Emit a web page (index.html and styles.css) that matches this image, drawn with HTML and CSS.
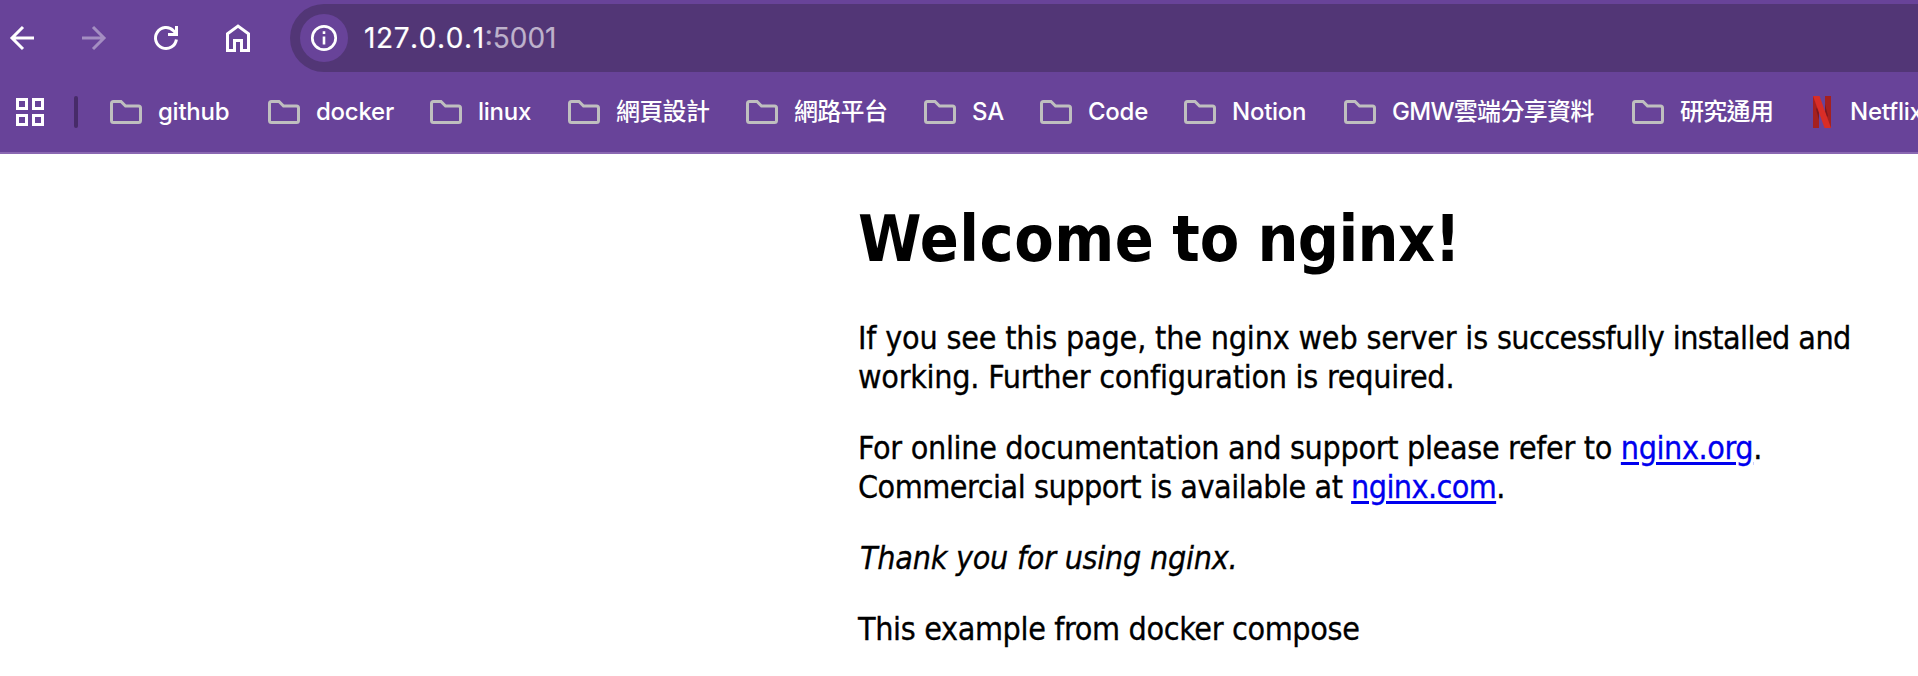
FILE: index.html
```
<!DOCTYPE html>
<html lang="zh-Hant">
<head>
<meta charset="utf-8">
<title>Welcome to nginx!</title>
<link rel="stylesheet" href="styles.css">
</head>
<body>
<svg class="defs" width="0" height="0" aria-hidden="true">
  <symbol id="folder" viewBox="0 0 32 24"><path d="M3.5 1.5H11L15.5 6H28.5Q30.500 6 30.500 8V20.500Q30.500 22.500 28.500 22.500H3.500Q1.500 22.500 1.500 20.500V3.500Q1.500 1.500 3.500 1.500Z" fill="none" stroke="#bfbfbf" stroke-width="3"/></symbol>
</svg>
<header class="chrome">
  <nav class="toolbar">
    <svg class="tool" viewBox="0 0 28 32"><path d="M26 16H4M15 5L4 16L15 27" fill="none" stroke="#fff" stroke-width="3"/></svg>
    <svg class="tool dim" viewBox="0 0 28 32"><path d="M2 16H24M13 5L24 16L13 27" fill="none" stroke="#fff" stroke-width="3"/></svg>
    <svg class="tool" viewBox="0 0 28 32"><path d="M24.400 17.500A10.500 10.500 0 1 1 21.500 8.700L24 11.200" fill="none" stroke="#fff" stroke-width="3"/><path d="M24.500 4V12.500H16" fill="none" stroke="#fff" stroke-width="3"/></svg>
    <svg class="tool" viewBox="0 0 28 32"><path d="M3.500 28.500V11.700L14 4L24.500 11.700V28.500H17.500V18.500H10.500V28.500Z" fill="none" stroke="#fff" stroke-width="3"/></svg>
    <div class="omnibox">
      <span class="info"><svg viewBox="0 0 48 48"><circle cx="24" cy="24" r="11.700" fill="none" stroke="#fff" stroke-width="2.700"/><path d="M24 22.500V30.500M24 17.300V20" stroke="#fff" stroke-width="2.600"/></svg></span>
      <div class="url"><span class="host">127.0.0.1</span><span class="port">:5001</span></div>
    </div>
  </nav>
  <div class="bookmarks">
    <svg class="apps" viewBox="0 0 28 28"><path d="M1.500 1.500h9v9h-9zM17.500 1.500h9v9h-9zM1.500 17.500h9v9h-9zM17.500 17.500h9v9h-9z" fill="none" stroke="#fff" stroke-width="3"/></svg>
    <span class="divider"></span>
    <div class="marks">
      <a class="mark"><svg><use href="#folder"/></svg>github</a>
      <a class="mark"><svg><use href="#folder"/></svg>docker</a>
      <a class="mark"><svg><use href="#folder"/></svg>linux</a>
      <a class="mark cjk"><svg><use href="#folder"/></svg>網頁設計</a>
      <a class="mark cjk"><svg><use href="#folder"/></svg>網路平台</a>
      <a class="mark"><svg><use href="#folder"/></svg>SA</a>
      <a class="mark"><svg><use href="#folder"/></svg>Code</a>
      <a class="mark"><svg><use href="#folder"/></svg>Notion</a>
      <a class="mark cjk"><svg><use href="#folder"/></svg>GMW雲端分享資料</a>
      <a class="mark cjk"><svg><use href="#folder"/></svg>研究通用</a>
      <a class="mark netflix"><svg viewBox="0 0 18 32"><path d="M0 0H6V32H0ZM12 0H18V32H12Z" fill="#a5201f"/><path d="M6 9V24L3 13ZM12 8V22L15 20Z" fill="#7d1720"/><path d="M0 0H6.500L18 32H11.500Z" fill="#d92d27"/></svg>Netflix</a>
    </div>
  </div>
</header>
<main class="page">
  <h1><span class="w1">Welcome</span> to <span class="w3">nginx!</span></h1>
  <p><span class="l1">If you see this page, the nginx web server is </span><span class="l1b">successfully installed and</span><br><span class="l2">working. Further configuration is required.</span></p>
  <p><span class="l3">For online documentation and support please refer to </span><a class="org" href="#">nginx.org</a>.<br><span class="l4">Commercial support is available at </span><a class="com" href="#">nginx.com</a>.</p>
  <p class="thanks"><em>Thank you for using nginx.</em></p>
  <p class="example">This example from docker compose</p>
</main>
</body>
</html>
```
FILE: styles.css
```
* { box-sizing: border-box; }
html, body { height: 100%; }
body {
  margin: 0;
  overflow: hidden;
  background: #fff;
  color: #000;
}
.defs { display: block; height: 0; }
.chrome {
  height: 154px;
  background: #684399;
  border-bottom: 2px solid #8a68b2;
  font-family: Inter, "Noto Sans CJK TC", sans-serif;
  color: #fff;
}
.toolbar {
  display: flex;
  align-items: center;
  height: 72px;
  padding: 4px 0 0 8px;
}
.tool {
  flex: none;
  width: 28px;
  height: 32px;
  margin-right: 44px;
}
.dim { opacity: .4; }
.tool:nth-child(4) { margin-right: 38px; }
.omnibox {
  display: flex;
  align-items: center;
  flex: 1;
  height: 68px;
  padding-left: 10px;
  background: #523676;
  border-radius: 34px 0 0 34px;
}
.info {
  width: 48px;
  height: 48px;
  border-radius: 50%;
  background: #684399;
}
.info svg { display: block; }
.url {
  margin-left: 16px;
  font-size: 28px;
  line-height: 34px;
  font-kerning: none;
  white-space: nowrap;
  -webkit-text-stroke: .2px currentColor;
}
.host { letter-spacing: .6px; }
.port { color: #beb2cb; }
.bookmarks {
  display: flex;
  align-items: center;
  height: 80px;
  padding-left: 16px;
}
.apps { flex: none; width: 28px; height: 28px; }
.divider {
  flex: none;
  width: 4px;
  height: 32px;
  margin: 0 32px 0 30px;
  border-radius: 2px;
  background: #472b69;
}
.marks {
  display: grid;
  grid-template-columns: 158px 162px 138px 178px 178px 116px 144px 160px 288px 181px 105px;
  overflow: hidden;
}
.mark {
  display: flex;
  align-items: center;
  font-size: 24px;
  font-weight: 500;
  line-height: 34px;
  letter-spacing: -.25px;
  white-space: nowrap;
}
.cjk { letter-spacing: -.7px; }
.mark svg { flex: none; width: 32px; height: 24px; margin-right: 16px; }
.netflix svg { width: 18px; height: 32px; margin-right: 19px; }
.page {
  padding: 46px 0 0 858px;
  font-family: "DejaVu Sans Condensed", "DejaVu Sans", sans-serif;
  font-size: 32px;
  line-height: 39px;
  white-space: nowrap;
}
.page h1 {
  margin: 0 0 41px;
  font-size: 64px;
  line-height: 78px;
  word-spacing: -2px;
}
.w1 { letter-spacing: .5px; }
.w3 { letter-spacing: -.6px; }
.page p { margin: 0 0 32px; -webkit-text-stroke: .3px currentColor; }
.page a { color: #0000ee; text-decoration-thickness: 3px; text-underline-offset: 3px; }
.l1 { letter-spacing: -.19px; }
.l1b { letter-spacing: -.57px; }
.l2 { letter-spacing: -.26px; }
.l3 { letter-spacing: -.33px; }
.l4 { letter-spacing: -.49px; }
.org { letter-spacing: -.42px; }
.com { letter-spacing: -.6px; }
.page .thanks { padding-left: 2px; letter-spacing: -.26px; }
.example { letter-spacing: -.36px; }
```
